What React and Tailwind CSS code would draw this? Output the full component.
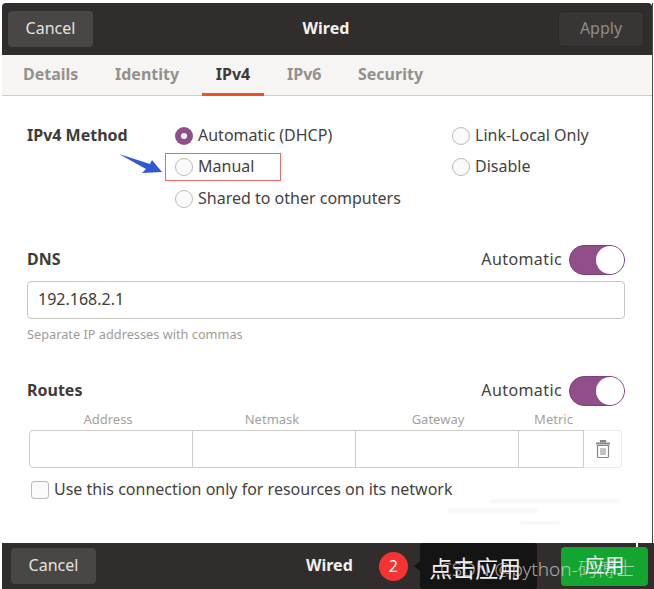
const font = { fontFamily: '"Noto Sans", "Noto Sans CJK SC", sans-serif' };

function Radio({ checked }) {
  return checked ? (
    <span className="w-[18px] h-[18px] rounded-full bg-[#924d8b] flex items-center justify-center shrink-0">
      <span className="w-[6px] h-[6px] rounded-full bg-white" />
    </span>
  ) : (
    <span className="w-[18px] h-[18px] rounded-full bg-[#fafafa] border border-[#bdb8b3] shrink-0" />
  );
}

function RadioRow({ checked, label }) {
  return (
    <div className="h-[31.5px] flex items-center gap-[5px] text-[16px] leading-[20px] text-[#44423f]">
      <Radio checked={checked} />
      <span className="-mt-[2px]">{label}</span>
    </div>
  );
}

function Toggle() {
  return (
    <div className="w-[56px] h-[30px] rounded-full bg-[#924d8b] border border-[#7c4276] flex justify-end items-center">
      <span className="w-[28px] h-[28px] rounded-full bg-white" />
    </div>
  );
}

function Header({ title, label }) {
  return (
    <div className="flex items-center justify-between h-[30px]">
      <span className="text-[16px] leading-[20px] font-bold text-[#3d3c3a] -mt-[2px]">{title}</span>
      <div className="flex items-center gap-[7px] text-[16px] leading-[20px] text-[#44423f]">
        <span className="-mt-[2px] tracking-[0.4px]">{label}</span>
        <Toggle />
      </div>
    </div>
  );
}

function Trash() {
  return (
    <svg width="16" height="20" viewBox="0 0 16 20" fill="none" stroke="#8a8683" strokeWidth="1.2">
      <path d="M1 4.5h14" strokeWidth="2" />
      <path d="M5.5 3.5V1.5h5v2" fill="#8a8683" />
      <path d="M2.5 6.5h11v11a1 1 0 0 1-1 1h-9a1 1 0 0 1-1-1z" />
      <path d="M6 9v7M8 9v7M10 9v7" strokeWidth="1" />
    </svg>
  );
}

export default function App() {
  return (
    <div style={font} className="relative w-[654px] h-[589px] bg-white overflow-hidden flex flex-col pt-[3px]">
      <div className="ml-[2px] mr-[1px] h-[540px] flex flex-col border-r border-[#4a4a4a]">
        <div className="h-[52px] bg-[#302d2c] rounded-t-[4px] flex items-center justify-between pl-[6px] pr-[8px] shrink-0">
          <div className="w-[85px] h-[36px] rounded-[4px] bg-[#494745] flex items-center justify-center text-[16px] text-[#e4e2df] pb-[2px]">Cancel</div>
          <span className="text-[16px] font-bold text-[#f2f1ef] ml-[1px] pb-[2px]">Wired</span>
          <div className="w-[86px] h-[36px] rounded-[4px] bg-[#383635] border border-[#2a2827] flex items-center justify-center text-[16px] text-[#8e8c8a] pb-[2px]">Apply</div>
        </div>

        <div className="h-[41px] bg-[#f6f5f4] border-b border-[#cfcbc7] flex items-stretch pl-[21px] text-[16px] leading-[24px] font-bold text-[#94908c] shrink-0">
          <span className="w-[92px] pt-[7px]">Details</span>
          <span className="w-[87px] pt-[7px]">Identity</span>
          <span className="w-[62px] -mb-px border-b-[3px] border-[#e95420] pt-[7px] text-center text-[#3d3c3a]">IPv4</span>
          <span className="w-[94px] pt-[7px] pl-[23px]">IPv6</span>
          <span className="pt-[7px]">Security</span>
        </div>

        <div className="flex-1 pl-[25px] pr-[27px] relative">
          <div className="flex pt-[24px]">
            <div className="w-[148px] h-[31.5px] flex items-center text-[16px] leading-[20px] font-bold text-[#3d3c3a] pb-[2px]">IPv4 Method</div>
            <div className="w-[277px]">
              <RadioRow checked label="Automatic (DHCP)" />
              <RadioRow label="Manual" />
              <RadioRow label="Shared to other computers" />
            </div>
            <div>
              <RadioRow label="Link-Local Only" />
              <RadioRow label="Disable" />
            </div>
          </div>

          <div className="mt-[30px]">
            <Header title="DNS" label="Automatic" />
            <div className="mt-[6px] h-[38px] rounded-[4px] border border-[#c9c5c1] flex items-center px-[10px] text-[16px] leading-[20px] text-[#3d3c3a] pb-[2px]">192.168.2.1</div>
            <div className="mt-[6px] text-[12.75px] leading-[18px] text-[#a09c98]">Separate IP addresses with commas</div>
          </div>

          <div className="mt-[33px]">
            <Header title="Routes" label="Automatic" />
            <div className="ml-[2px] mt-[4px] mb-[1px] flex text-[13px] leading-[18px] text-[#a5a19d] h-[19px] items-center text-center">
              <span className="w-[158px]">Address</span>
              <span className="w-[170px]">Netmask</span>
              <span className="w-[162px]">Gateway</span>
              <span className="w-[69px]">Metric</span>
            </div>
            <div className="ml-[2px] mr-[3px] h-[38px] flex">
              <div className="w-[164px] border border-[#cfcbc7] rounded-l-[4px]" />
              <div className="w-[163px] border-y border-r border-[#cfcbc7]" />
              <div className="w-[163px] border-y border-r border-[#cfcbc7]" />
              <div className="w-[65px] border-y border-r border-[#cfcbc7]" />
              <div className="flex-1 border-y border-r border-[#ecebe9] rounded-r-[4px] flex items-center justify-center">
                <Trash />
              </div>
            </div>
          </div>

          <div className="ml-[4px] mt-[12px] flex items-center gap-[5px] text-[16px] leading-[22px] text-[#44423f]">
            <span className="w-[18px] h-[18px] rounded-[3px] border border-[#bdb8b3] bg-[#fafafa] shrink-0" />
            <span className="-mt-[2px]">Use this connection only for resources on its network</span>
          </div>
        </div>
      </div>

      <div className="ml-[2px] h-[46px] bg-[#302d2c] flex items-center pl-[9px] pr-[6px] shrink-0">
        <div className="w-[85px] h-[36px] rounded-[4px] bg-[#494745] flex items-center justify-center text-[16px] text-[#e4e2df] pb-[2px]">Cancel</div>
        <span className="ml-[210px] text-[16px] font-bold text-[#f2f1ef] pb-[2px]">Wired</span>
        <span className="ml-[26px] w-[29px] h-[29px] rounded-full bg-[#f53333] flex items-center justify-center text-[16px] text-white">2</span>
        <div className="relative ml-[12px] w-[117px] h-[46px] bg-[#141414] rounded-[3px] flex items-center justify-center text-[23px] leading-[28px] text-[#f0f0f0] pt-[4px] pr-[6px]">
          <span className="absolute -left-[6px] top-[18px] w-0 h-0 border-y-[5px] border-y-transparent border-r-[6px] border-r-[#141414]" />
          点击应用
        </div>
        <div className="ml-auto w-[87px] h-[39px] rounded-[4px] bg-[#13a52f] flex items-center justify-center text-[20px] text-[#f0f0f0]">应用</div>
      </div>

      {/* annotations over the screenshot */}
      <div className="absolute left-[165px] top-[153px] w-[116px] h-[28px] border border-[#f2666a]" />
      <svg className="absolute left-[118px] top-[153px]" width="46" height="22" viewBox="0 0 46 22">
        <path d="M1 1 L32 11 L34 7 L44 19 L24 20 L28 16 Z" fill="#2f57d6" />
      </svg>
      <span className="absolute left-[440px] top-[557px] text-[19px] leading-[24px] font-light text-[#e8e8e8]/70 whitespace-nowrap">CSDN @python-码博士</span>
      <div className="absolute left-[636px] top-[542px] w-[2px] h-[5px] bg-white" />
      <div className="absolute left-[448px] top-[508px] w-[90px] h-[5px] bg-[#f8f8f8] blur-[1px]" />
      <div className="absolute left-[490px] top-[499px] w-[130px] h-[4px] bg-[#f7f7f7] blur-[1px]" />
      <div className="absolute left-[520px] top-[522px] w-[40px] h-[2px] bg-[#f0f0f0] blur-[1px]" />
    </div>
  );
}
